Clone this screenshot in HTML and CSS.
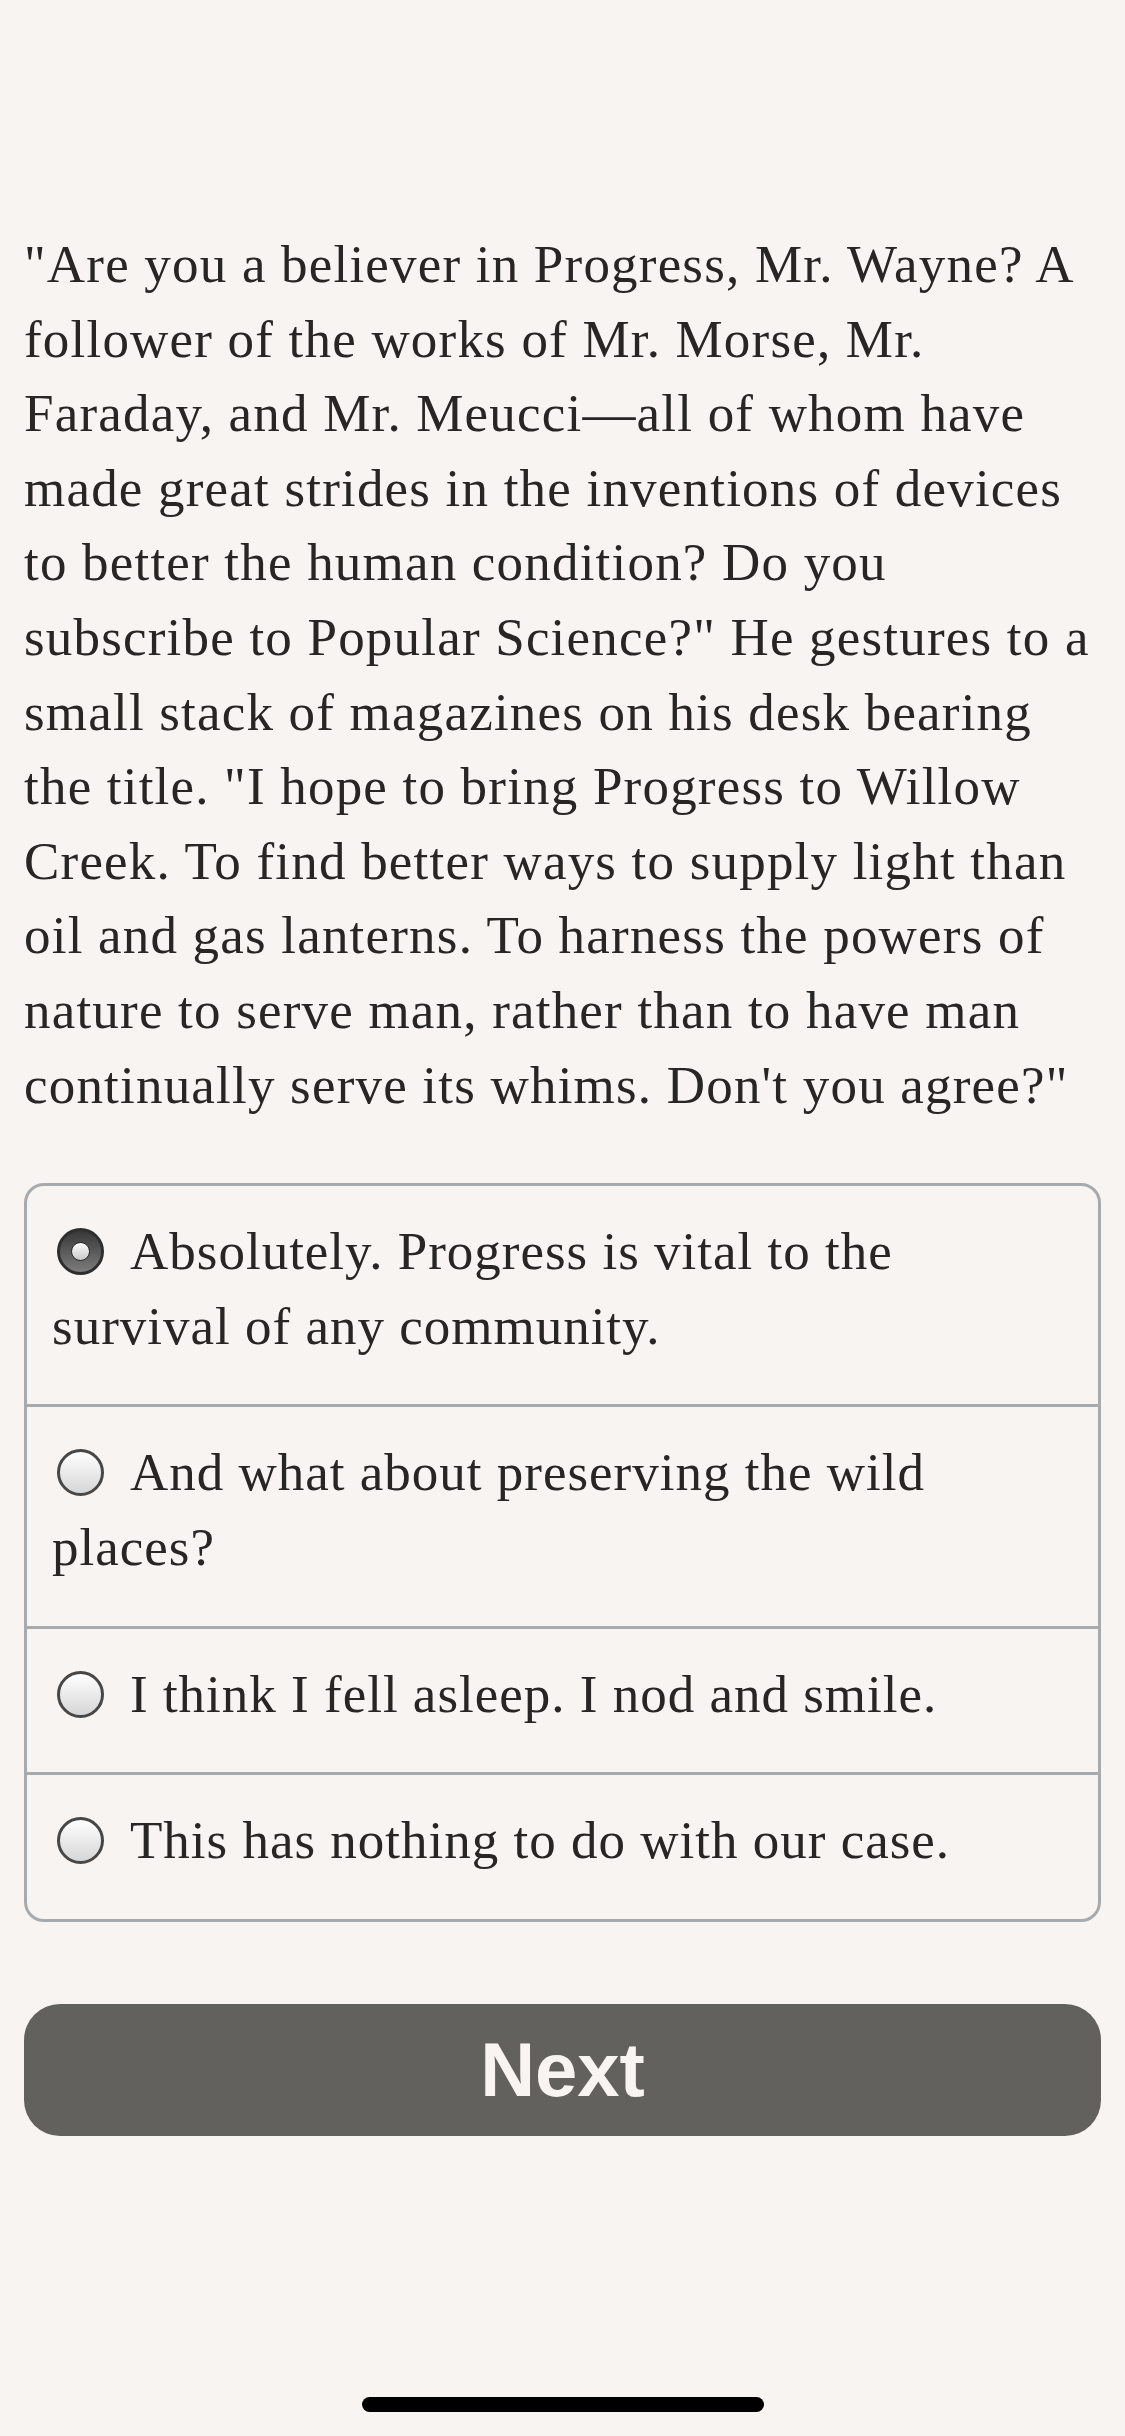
FILE: index.html
```html
<!DOCTYPE html>
<html lang="en">
<head>
<meta charset="utf-8">
<title>Progress</title>
<link rel="stylesheet" href="styles.css">
</head>
<body>
<main class="page">
  <p class="story">"Are you a believer in Progress, Mr. Wayne? A<br>follower of the works of Mr. Morse, Mr.<br>Faraday, and Mr. Meucci—all of whom have<br>made great strides in the inventions of devices<br>to better the human condition? Do you<br>subscribe to Popular Science?" He gestures to a<br>small stack of magazines on his desk bearing<br>the title. "I hope to bring Progress to Willow<br>Creek. To find better ways to supply light than<br>oil and gas lanterns. To harness the powers of<br>nature to serve man, rather than to have man<br>continually serve its whims. Don't you agree?"</p>

  <ul class="choices">
    <li class="choice"><span class="radio radio-on"></span>Absolutely. Progress is vital to the<br>survival of any community.</li>
    <li class="choice"><span class="radio"></span>And what about preserving the wild<br>places?</li>
    <li class="choice"><span class="radio"></span>I think I fell asleep. I nod and smile.</li>
    <li class="choice"><span class="radio"></span>This has nothing to do with our case.</li>
  </ul>

  <button class="next" type="button">Next</button>
</main>
<div class="home-indicator"></div>
</body>
</html>
```

FILE: styles.css
```css
html, body {
  margin: 0;
  padding: 0;
}

body {
  width: 1125px;
  height: 2436px;
  background: #f7f4f1;
  position: relative;
  overflow: hidden;
  color: #282624;
  font-family: "Liberation Serif", "Times New Roman", serif;
}

.page {
  padding: 227px 24px 0 24px;
  display: flex;
  flex-direction: column;
}

.story {
  margin: 0;
  font-size: 53px;
  line-height: 74.6px;
  letter-spacing: 1.2px;
  white-space: nowrap;
}

.choices {
  list-style: none;
  margin: 61px 0 0 0;
  padding: 0;
  border: 3px solid #a8abae;
  border-radius: 20px;
  overflow: hidden;
}

.choice {
  font-size: 53px;
  line-height: 74.6px;
  letter-spacing: 1px;
  white-space: nowrap;
  padding: 28px 24px 41px 25px;
  border-top: 3px solid #a8abae;
}

.choice:first-child {
  border-top: none;
}

.radio {
  display: inline-block;
  box-sizing: border-box;
  width: 47px;
  height: 47px;
  border-radius: 50%;
  border: 3px solid #474747;
  background: linear-gradient(#ffffff, #d6d6d6);
  margin: 0 26px 0 5px;
  vertical-align: -6px;
  position: relative;
}

.radio-on {
  border-color: #2e2e2e;
  background: linear-gradient(#383838, #7c7c7c);
}

.radio-on::after {
  content: "";
  position: absolute;
  left: 50%;
  top: 50%;
  width: 19px;
  height: 19px;
  margin: -9.5px 0 0 -9.5px;
  box-sizing: border-box;
  border-radius: 50%;
  border: 1.5px solid #2a2a2a;
  background: linear-gradient(#ffffff, #c8c8c8);
}

.next {
  margin-top: 82px;
  height: 132px;
  width: 100%;
  border: none;
  border-radius: 36px;
  background: #63615e;
  color: #f7f4f1;
  font-family: "Liberation Sans", Arial, sans-serif;
  font-weight: bold;
  font-size: 76px;
  padding: 0;
}

.home-indicator {
  position: absolute;
  left: 362px;
  top: 2397px;
  width: 402px;
  height: 15px;
  border-radius: 8px;
  background: #000;
}
```
